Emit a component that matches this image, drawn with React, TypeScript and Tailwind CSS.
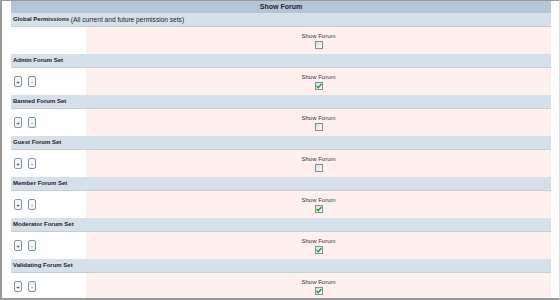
const sets = [
  { name: "Admin Forum Set", on: true },
  { name: "Banned Forum Set", on: false },
  { name: "Guest Forum Set", on: false },
  { name: "Member Forum Set", on: true },
  { name: "Moderator Forum Set", on: true },
  { name: "Validating Forum Set", on: true },
];

function Check({ on }: { on: boolean }) {
  return (
    <div className="w-[8px] h-[8px] border border-[#7f8fa0] bg-gradient-to-br from-[#dcdcdc] to-[#ffffff] flex items-center justify-center">
      {on && (
        <svg width="6" height="6" viewBox="0 0 6 6">
          <path d="M0.6 3 L2.3 4.8 L5.4 1" fill="none" stroke="#21a121" strokeWidth="1.4" />
        </svg>
      )}
    </div>
  );
}

function Cell({ on, buttons }: { on: boolean; buttons: boolean }) {
  return (
    <div className="flex h-[27px] shrink-0">
      <div className="w-[75px] bg-white flex items-center gap-[6px] pl-[3px]">
        {buttons && (
          <>
            <div className="w-[8px] h-[11px] rounded-[2px] border border-[#8395a8] bg-[#f4f6f8] flex items-center justify-center text-[6px] leading-none text-[#222]">
              +
            </div>
            <div className="w-[8px] h-[11px] rounded-[2px] border border-[#8395a8] bg-[#f4f6f8] flex items-center justify-center text-[6px] leading-none text-[#222]">
              -
            </div>
          </>
        )}
      </div>
      <div className="flex-1 bg-[#fff0f0] flex flex-col items-center justify-center gap-[1px]">
        <span className="text-[6px] leading-[7px] text-[#333]">Show Forum</span>
        <Check on={on} />
      </div>
    </div>
  );
}

function Title({ children }: { children: React.ReactNode }) {
  return (
    <div className="h-[14px] shrink-0 bg-[#d6e0ea] border-b border-[#c3d0d0] flex items-center pl-[2px] text-[6.6px] text-[#222]">
      {children}
    </div>
  );
}

export default function App() {
  return (
    <div
      className="w-[560px] h-[300px] overflow-hidden bg-white border-t border-l-2 border-b-2 border-r border-t-[#999] border-l-[#999] border-b-[#999] border-r-[#ddd] pl-[9px] pr-[8px] flex flex-col"
      style={{ fontFamily: '"Liberation Sans", Arial, sans-serif' }}
    >
      <div className="h-[12px] shrink-0 bg-[#b3c5d7] flex items-center justify-center text-[7px] font-bold text-[#223]">
        Show Forum
      </div>
      <Title>
        <b className="text-[6px]">Global Permissions</b>&nbsp;(All current and future permission sets)
      </Title>
      <Cell on={false} buttons={false} />
      {sets.map((s) => (
        <div key={s.name} className="flex flex-col shrink-0">
          <Title>
            <b className="text-[6px]">{s.name}</b>
          </Title>
          <Cell on={s.on} buttons={true} />
        </div>
      ))}
    </div>
  );
}
